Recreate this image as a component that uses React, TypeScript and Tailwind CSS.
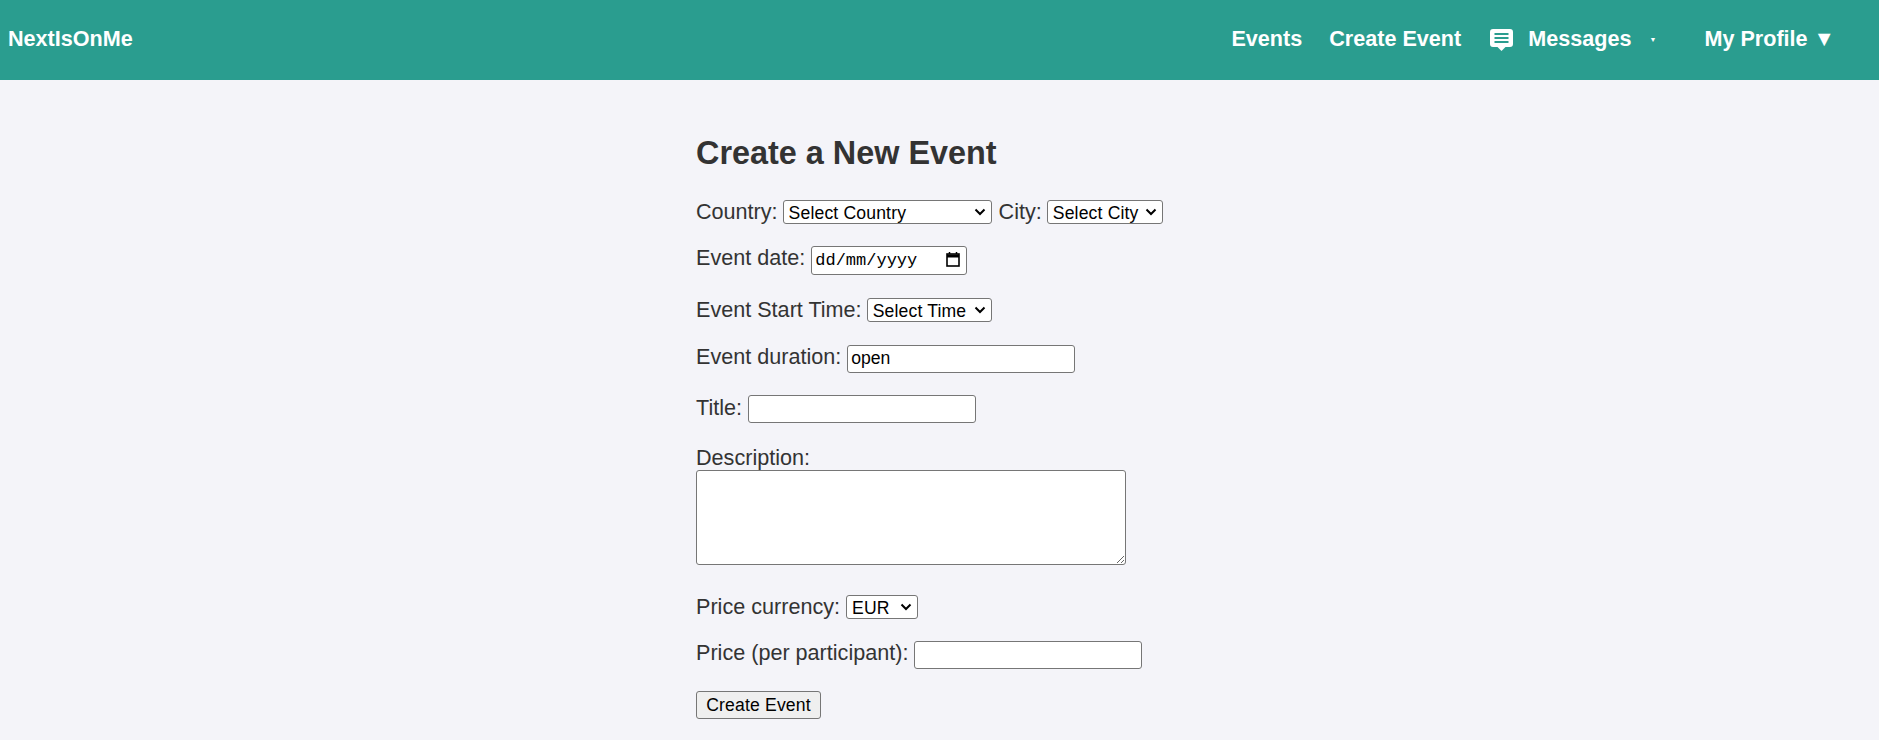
import type { ReactNode } from 'react';

const arial = "font-['Liberation_Sans',Arial,sans-serif]";

function MessageIcon() {
  return (
    <svg viewBox="0 0 23 22" className="h-[22px] w-[23px]">
      <path
        d="M3 0h17a3 3 0 0 1 3 3v12a3 3 0 0 1-3 3h-4.500l-4 4-4-4H3a3 3 0 0 1-3-3V3a3 3 0 0 1 3-3z"
        fill="#fff"
      />
      <path d="M4.500 5h14M4.500 9h14M4.500 13h14" stroke="#2a9d8f" strokeWidth="2" />
    </svg>
  );
}

function Select({ label, width, offset = '-ml-[1px] mr-[1px]' }: { label: string; width: string; offset?: string }) {
  return (
    <span className={`${offset} relative inline-block align-baseline`}>
      <select className={`${width} h-[24px] appearance-none rounded-[3px] border border-[#767676] bg-white pl-[5px] text-[17.6px] tracking-[0.15px] text-black`}>
        <option>{label}</option>
      </select>
      <svg viewBox="0 0 12 8" className="pointer-events-none absolute top-[9px] right-[6px] h-[8px] w-[12px]" fill="none">
        <path d="M1.500 1.500 6 6l4.500-4.500" stroke="#000" strokeWidth="2" />
      </svg>
    </span>
  );
}

function Row({ label, children, className }: { label: string; children: ReactNode; className: string }) {
  return (
    <div className={className}>
      <label>{label}</label> {children}
    </div>
  );
}

const inputCls = 'h-[28px] w-[228px] rounded-[3px] border border-[#767676] bg-white px-[3px] text-[17.6px] text-black';

export default function App() {
  return (
    <div className={`${arial} min-h-[740px] bg-[#f4f4f9] text-[21.6px] leading-[25px] text-[#333]`}>
      <header className="flex h-[80px] items-center justify-between bg-[#2a9d8f] pl-[8px] pr-[44px] font-bold text-white">
        <span className="mb-[4px]">NextIsOnMe</span>
        <nav className="mb-[4px] flex items-center">
          <span>Events</span>
          <span className="ml-[27px]">Create Event</span>
          <span className="mt-[4px] ml-[29px]"><MessageIcon /></span>
          <span className="ml-[15px]">Messages</span>
          <span className="mt-[2px] ml-[18px] text-[7px]">▼</span>
          <span className="ml-[48px]">My Profile ▼</span>
        </nav>
      </header>
      <main className="w-[1000px] pl-[696px]">
        <h1 className="pt-[55px] text-[32.4px] leading-[37px] font-bold">Create a New Event</h1>
        <form className="mt-[27px] w-[600px]">
          <Row label="Country:" className="mb-[21px]">
            <Select label="Select Country" width="w-[209px]" />{' '}
            <label>City:</label>{' '}
            <Select label="Select City" width="w-[116px]" />
          </Row>
          <Row label="Event date:" className="mb-[22px]">
            <span className="relative inline-block align-baseline">
              <input
                type="text"
                readOnly
                defaultValue="dd/mm/yyyy"
                className="h-[29px] w-[156px] rounded-[3px] border border-[#767676] bg-white px-[3px] font-['Liberation_Mono',monospace] text-[17px] text-black"
              />
              <svg viewBox="0 0 14 15" className="pointer-events-none absolute top-[7px] right-[7px] h-[15px] w-[14px]" fill="none">
                <rect x="1" y="2" width="12" height="12" stroke="#000" strokeWidth="1.600" />
                <path d="M1 4h12" stroke="#000" strokeWidth="3" />
                <path d="M3.500 0v2M10.500 0v2" stroke="#000" strokeWidth="1.500" />
              </svg>
            </span>
          </Row>
          <Row label="Event Start Time:" className="mb-[22px]">
            <Select label="Select Time" width="w-[125px]" />
          </Row>
          <Row label="Event duration:" className="mb-[22px]">
            <input type="text" defaultValue="open" className={inputCls} />
          </Row>
          <Row label="Title:" className="mb-[22px]">
            <input type="text" className={inputCls} />
          </Row>
          <div className="mb-[29px]">
            <label className="block">Description:</label>
            <textarea className="block h-[95px] w-[430px] rounded-[3px] border border-[#767676] bg-white" />
          </div>
          <Row label="Price currency:" className="mb-[21px]">
            <Select label="EUR" width="w-[72px]" offset="ml-0" />
          </Row>
          <Row label="Price (per participant):" className="mb-[22px]">
            <input type="text" className={inputCls} />
          </Row>
          <button type="button" className="h-[28px] w-[125px] rounded-[3px] border border-[#767676] bg-[#efefef] text-[17.6px] tracking-[0.15px] text-black">
            Create Event
          </button>
        </form>
      </main>
    </div>
  );
}
